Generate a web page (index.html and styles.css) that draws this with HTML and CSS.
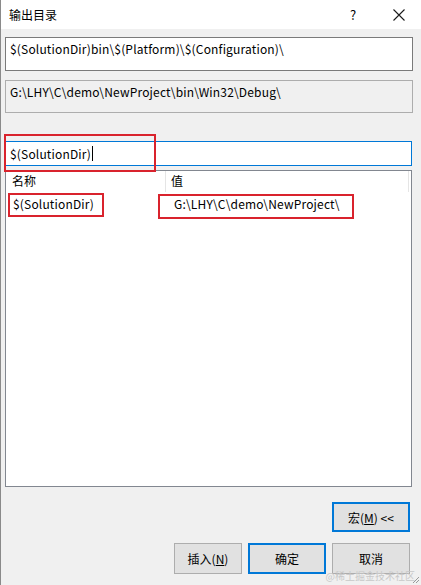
FILE: index.html
```html
<!DOCTYPE html>
<html>
<head>
<meta charset="utf-8">
<link rel="stylesheet" href="styles.css">
</head>
<body>
<div class="window">
  <div class="titlebar">
    <span class="title">输出目录</span>
    <span class="help">?</span>
    <span class="close">
      <svg width="14" height="14" viewBox="0 0 14 14"><path d="M1.5 1.5 L12.5 12.5 M12.5 1.5 L1.5 12.5" stroke="#1a1a1a" stroke-width="1.1" fill="none"/></svg>
    </span>
  </div>
  <div class="content">
    <div class="field edit">$(SolutionDir)bin\$(Platform)\$(Configuration)\</div>
    <div class="field readonly">G:\LHY\C\demo\NewProject\bin\Win32\Debug\</div>
    <div class="filter-wrap">
      <div class="filter">$(SolutionDir)<span class="caret"></span></div>
      <div class="mark mark-filter"></div>
    </div>
    <div class="list">
      <div class="list-head">
        <div class="col-name">名称</div>
        <div class="col-value">值</div>
        <div class="col-rest"></div>
      </div>
      <div class="list-row">
        <div class="col-name">$(SolutionDir)<div class="mark mark-name"></div></div>
        <div class="col-value">G:\LHY\C\demo\NewProject\<div class="mark mark-value"></div></div>
      </div>
    </div>
    <div class="macro-row">
      <button class="btn focus">宏(<u>M</u>) &lt;&lt;</button>
    </div>
    <div class="btn-row">
      <button class="btn">插入(<u>N</u>)</button>
      <button class="btn focus">确定</button>
      <button class="btn">取消</button>
    </div>
  </div>
  <div class="watermark">@稀土掘金技术社区</div>
  <svg class="grip" width="10" height="10" viewBox="0 0 10 10"><path d="M9 3 L3 9 M9 6 L6 9" stroke="#9a9a9a" stroke-width="1"/></svg>
</div>
</body>
</html>
```
FILE: styles.css
```css
* { box-sizing: border-box; }
html, body { margin: 0; padding: 0; }
body {
  width: 421px;
  height: 585px;
  overflow: hidden;
  font-family: "Noto Sans CJK SC", "Noto Sans", sans-serif;
  font-size: 12px;
  color: #000;
  background: #f0f0f0;
}
.window {
  position: relative;
  width: 421px;
  height: 585px;
  border-left: 1px solid #8a8a8a;
  background: #f0f0f0;
}
.titlebar {
  height: 29px;
  background: #fff;
  display: flex;
  align-items: center;
  padding-left: 8px;
}
.title { flex: 1; font-size: 12px; }
.help { width: 14px; text-align: center; margin-right: 32px; font-size: 13px; }
.close { width: 14px; height: 14px; margin-right: 15px; display: flex; }
.content {
  padding: 8px 0 0 4px;
}
.field {
  width: 408px;
  border: 1px solid #7a7a7a;
  padding: 2px 4px;
  line-height: 17px;
  white-space: nowrap;
  letter-spacing: 0.17px;
}
.edit { height: 34px; background: #fff; }
.readonly { height: 33px; margin-top: 9px; background: #f0f0f0; border-color: #adadad; }
.filter-wrap { position: relative; margin-top: 28px; }
.filter {
  width: 407px;
  height: 25px;
  background: #fff;
  border: 1px solid #0078d7;
  padding: 0 4px;
  line-height: 23px;
  display: flex;
  align-items: center;
  letter-spacing: 0.17px;
}
.caret { display: inline-block; width: 1px; height: 15px; background: #000; margin-left: 1px; }
.mark { position: absolute; border: 2px solid #d9232d; pointer-events: none; }
.mark-filter { left: -1px; top: -7px; width: 152px; height: 38px; }
.list {
  margin-top: 4px;
  width: 407px;
  height: 317px;
  background: #fff;
  border: 1px solid #828790;
}
.list-head {
  display: flex;
  height: 21px;
  align-items: stretch;
}
.list-head > div { line-height: 20px; }
.list-head .col-name { width: 160px; border-right: 1px solid #e5e5e5; padding-left: 6px; }
.list-head .col-value { width: 243px; padding-left: 5px; border-right: 1px solid #e5e5e5; }
.list-head .col-rest { flex: 1; }
.list-row { display: flex; height: 24px; align-items: center; }
.list-row > div { position: relative; line-height: 22px; white-space: nowrap; letter-spacing: 0.17px; }
.list-row .col-name { width: 161px; padding-left: 7px; }
.list-row .col-value { padding-left: 7px; }
.mark-name { left: 2px; top: 0; width: 96px; height: 24px; }
.mark-value { left: -9px; top: 1px; width: 196px; height: 25px; }
.macro-row { display: flex; justify-content: flex-end; padding-right: 11px; margin-top: 15px; }
.btn-row { display: flex; justify-content: flex-end; gap: 16px; padding-right: 11px; margin-top: 11px; }
.btn-row .btn + .btn { margin-left: -10px; }
.btn {
  font-family: inherit;
  font-size: 12px;
  width: 78px;
  height: 31px;
  background: #e1e1e1;
  border: 1px solid #adadad;
  padding: 0;
  color: #000;
}
.btn-row .btn:first-child { width: 68px; }
.btn.focus { border: 2px solid #0078d7; }
.macro-row .btn { height: 30px; }
u { text-decoration: underline; }
.watermark {
  position: absolute;
  right: 6px;
  bottom: 2px;
  font-size: 10px;
  color: #c8c8c8;
}
.grip { position: absolute; right: 1px; bottom: 1px; }
```
